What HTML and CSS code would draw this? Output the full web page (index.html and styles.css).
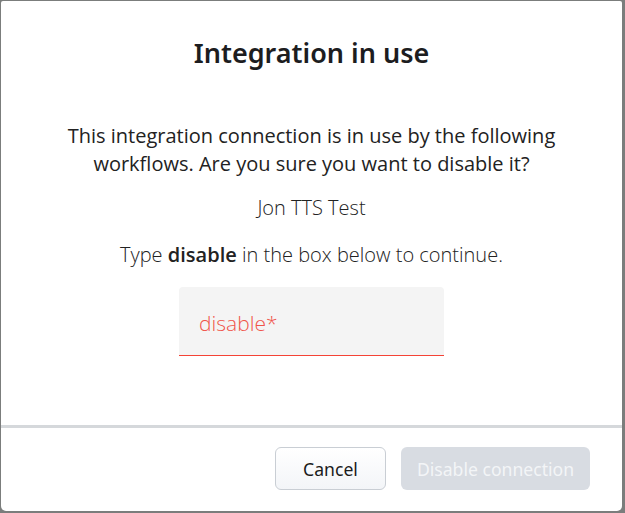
FILE: index.html
```html
<!DOCTYPE html>
<html lang="en">
<head>
    <meta charset="UTF-8">
    <title>Integration in use</title>
    <link rel="stylesheet" href="styles.css">
</head>
<body>
    <div class="modal">
        <div class="modal-body">
            <h2 class="modal-title">Integration in use</h2>
            <p class="modal-text">This integration connection is in use by the following workflows. Are you sure you want to disable it?</p>
            <p class="workflow-name">Jon TTS Test</p>
            <p class="confirm-hint">Type <b>disable</b> in the box below to continue.</p>
            <div class="confirm-field">
                <input type="text" class="confirm-input" placeholder="disable*">
            </div>
        </div>
        <div class="modal-footer">
            <button class="btn btn-cancel">Cancel</button>
            <button class="btn btn-disable" disabled>Disable connection</button>
        </div>
    </div>
</body>
</html>
```

FILE: styles.css
```css
html, body {
    margin: 0;
    height: 100%;
}

body {
    background: #7b7d7c;
    padding: 1px 3px 2px 1px;
    box-sizing: border-box;
    font-family: "Open Sans", "Noto Sans", sans-serif;
    color: #222;
}

.modal {
    background: #fff;
    height: 100%;
    border-radius: 2px 2px 5px 5px;
    display: flex;
    flex-direction: column;
}

.modal-body {
    flex: 1;
    display: flex;
    flex-direction: column;
    align-items: center;
    text-align: center;
    padding: 0 30px;
}

.modal-title {
    font-family: "Noto Sans", sans-serif;
    font-weight: 600;
    font-size: 27px;
    line-height: 36px;
    color: #1d1d1f;
    margin: 34px 0 0;
}

.modal-text {
    font-size: 20px;
    line-height: 28px;
    margin: 51px 0 0;
    width: 540px;
}

.workflow-name {
    font-size: 20px;
    line-height: 28px;
    font-weight: 300;
    margin: 16px 0 0;
}

.confirm-hint {
    font-size: 20px;
    line-height: 28px;
    font-weight: 300;
    margin: 19px 0 0;
}

.confirm-hint b {
    font-weight: 600;
}

.confirm-field {
    margin-top: 18px;
    width: 265px;
    border-bottom: 1px solid #f44336;
    border-radius: 4px 4px 0 0;
    background: #f4f4f4;
}

.confirm-input {
    display: block;
    width: 100%;
    box-sizing: border-box;
    height: 68px;
    border: none;
    background: transparent;
    padding: 4px 20px 0;
    font-family: "Open Sans", sans-serif;
    font-size: 21px;
    font-weight: 300;
    outline: none;
}

.confirm-input::placeholder {
    color: #f0544a;
}

.modal-footer {
    border-top: 3px solid #d5d8db;
    height: 86px;
    box-sizing: border-box;
    display: flex;
    justify-content: flex-end;
    align-items: center;
    gap: 15px;
    padding: 0 32px 2px 0;
}

.btn {
    font-family: "Noto Sans", sans-serif;
    font-size: 17.6px;
    height: 43px;
    border-radius: 6px;
    cursor: pointer;
}

.btn-cancel {
    width: 111px;
    border: 1px solid #c9ced4;
    background: linear-gradient(#fff, #f3f5f8);
    color: #1b1b1b;
}

.btn-disable {
    width: 189px;
    border: none;
    background: #d8dce2;
    color: #f3f5f7;
    cursor: default;
}
```
